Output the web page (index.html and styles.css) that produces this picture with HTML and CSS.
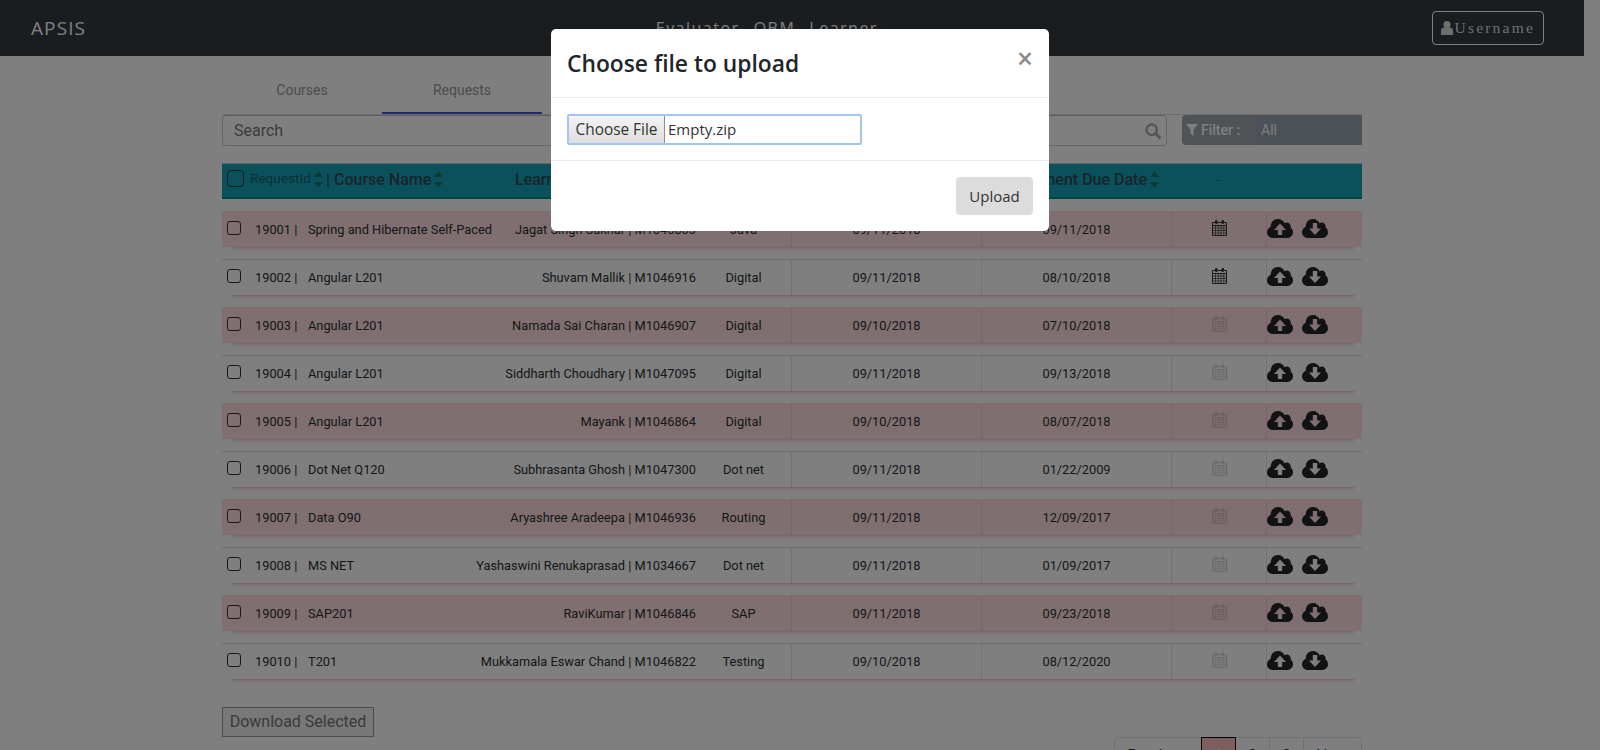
FILE: index.html
```html
<!DOCTYPE html>
<html lang="en">
<head>
  <meta charset="UTF-8">
  <title>APSIS</title>
  <link rel="stylesheet" href="styles.css">
</head>
<body>

  <!-- icons used all over the table -->
  <svg class="sprite" xmlns="http://www.w3.org/2000/svg">
    <symbol id="ic-up" viewBox="0 0 26 19">
      <path fill-rule="evenodd" d="M6 19C2.700 19 0 16.400 0 13.200 0 10.700 1.500 8.600 3.700 7.700 3.500 3.400 6.800 0 11 0c2.900 0 5.400 1.700 6.600 4.200.7-.4 1.500-.6 2.200-.6 2.300 0 3.900 1.700 3.900 4.100 0 .3 0 .6-.1.900 1.400 1 2.400 2.700 2.400 4.600 0 3.200-2.700 5.800-6 5.800zM13 4.500 7 11h3.800v5h4.400v-5H19z"/>
    </symbol>
    <symbol id="ic-down" viewBox="0 0 26 19">
      <path fill-rule="evenodd" d="M6 19C2.700 19 0 16.400 0 13.200 0 10.700 1.500 8.600 3.700 7.700 3.500 3.400 6.800 0 11 0c2.900 0 5.400 1.700 6.600 4.200.7-.4 1.500-.6 2.200-.6 2.300 0 3.900 1.700 3.900 4.100 0 .3 0 .6-.1.900 1.400 1 2.400 2.700 2.400 4.600 0 3.200-2.700 5.800-6 5.800zM10.800 4v5.500H7l6 6.500 6-6.500h-3.800V4z"/>
    </symbol>
    <symbol id="ic-cal" viewBox="0 0 15 16">
      <path fill="none" stroke="currentColor" d="M.5 2.500h14v13H.5zM.5 5.500h14"/>
      <path fill="none" stroke="currentColor" stroke-width=".7" d="M.5 8h14M.5 10.500h14M.5 13h14M3.500 5.500v10M6.300 5.500v10M9 5.500v10M11.800 5.500v10"/>
      <rect x="3" y="0" width="2.500" height="4" rx="1.200"/>
      <rect x="9.500" y="0" width="2.500" height="4" rx="1.200"/>
    </symbol>
    <symbol id="ic-sort" viewBox="0 0 9 17">
      <path d="M4.500 0l4.500 6H0zM4.500 17l4.500-6H0z"/>
    </symbol>
  </svg>

  <div class="page">
    <nav class="navbar">
      <a class="brand">APSIS</a>
      <div class="nav-links">
        <span>Evaluator</span>
        <span>QBM</span>
        <span>Learner</span>
      </div>
      <button type="button" class="user-btn">
        <svg class="user-ic" viewBox="0 0 12 14"><circle cx="6" cy="3.600" r="3.600"/><path d="M0 14V9.500C0 7.500 1.500 6.500 3 6.500h6c1.500 0 3 1 3 3V14z"/></svg>Username
      </button>
    </nav>

    <main class="container">
      <div class="tabs">
        <a class="tab">Courses</a>
        <a class="tab active">Requests</a>
      </div>

      <div class="toolbar">
        <div class="search">
          <span>Search</span>
          <svg class="search-ic" viewBox="0 0 16 16"><circle cx="6.700" cy="6.700" r="5.200" fill="none" stroke="currentColor" stroke-width="2.400"/><path d="M10.500 10.500l4 4" stroke="currentColor" stroke-width="3" stroke-linecap="round"/></svg>
        </div>
        <div class="filter">
          <div class="filter-label">
            <svg class="filter-ic" viewBox="0 0 12 12"><path d="M0 0h12L7.500 5.500V12L4.500 9.500v-4z"/></svg>Filter :
          </div>
          <div class="filter-value">All</div>
        </div>
      </div>

      <div class="head">
        <div><span class="check big"></span></div>
        <div class="head-id"><span class="id-label">RequestId</span><svg class="sort"><use href="#ic-sort"/></svg></div>
        <div class="head-name">| Course Name<svg class="sort"><use href="#ic-sort"/></svg></div>
        <div class="head-name">Learner Name</div>
        <div class="head-name">Track</div>
        <div class="head-name">Date</div>
        <div class="head-name head-due">Assignment Due Date<svg class="sort"><use href="#ic-sort"/></svg></div>
        <div class="center">-</div>
        <div></div>
      </div>

      <div class="item late">
        <div><span class="check"></span></div>
        <div>19001 |</div>
        <div class="course">Spring and Hibernate Self-Paced</div>
        <div class="learner">Jagat Singh Sakhar | M1046803</div>
        <div class="center">Java</div>
        <div class="center line">09/11/2018</div>
        <div class="center line">09/11/2018</div>
        <div class="center line"><svg class="cal"><use href="#ic-cal"/></svg></div>
        <div class="line clouds"><svg class="cloud"><use href="#ic-up"/></svg><svg class="cloud"><use href="#ic-down"/></svg></div>
      </div>

      <div class="item">
        <div><span class="check"></span></div>
        <div>19002 |</div>
        <div class="course">Angular L201</div>
        <div class="learner">Shuvam Mallik | M1046916</div>
        <div class="center">Digital</div>
        <div class="center line">09/11/2018</div>
        <div class="center line">08/10/2018</div>
        <div class="center line"><svg class="cal"><use href="#ic-cal"/></svg></div>
        <div class="line clouds"><svg class="cloud"><use href="#ic-up"/></svg><svg class="cloud"><use href="#ic-down"/></svg></div>
      </div>

      <div class="item late">
        <div><span class="check"></span></div>
        <div>19003 |</div>
        <div class="course">Angular L201</div>
        <div class="learner">Namada Sai Charan | M1046907</div>
        <div class="center">Digital</div>
        <div class="center line">09/10/2018</div>
        <div class="center line">07/10/2018</div>
        <div class="center line"><svg class="cal off"><use href="#ic-cal"/></svg></div>
        <div class="line clouds"><svg class="cloud"><use href="#ic-up"/></svg><svg class="cloud"><use href="#ic-down"/></svg></div>
      </div>

      <div class="item">
        <div><span class="check"></span></div>
        <div>19004 |</div>
        <div class="course">Angular L201</div>
        <div class="learner">Siddharth Choudhary | M1047095</div>
        <div class="center">Digital</div>
        <div class="center line">09/11/2018</div>
        <div class="center line">09/13/2018</div>
        <div class="center line"><svg class="cal off"><use href="#ic-cal"/></svg></div>
        <div class="line clouds"><svg class="cloud"><use href="#ic-up"/></svg><svg class="cloud"><use href="#ic-down"/></svg></div>
      </div>

      <div class="item late">
        <div><span class="check"></span></div>
        <div>19005 |</div>
        <div class="course">Angular L201</div>
        <div class="learner">Mayank | M1046864</div>
        <div class="center">Digital</div>
        <div class="center line">09/10/2018</div>
        <div class="center line">08/07/2018</div>
        <div class="center line"><svg class="cal off"><use href="#ic-cal"/></svg></div>
        <div class="line clouds"><svg class="cloud"><use href="#ic-up"/></svg><svg class="cloud"><use href="#ic-down"/></svg></div>
      </div>

      <div class="item">
        <div><span class="check"></span></div>
        <div>19006 |</div>
        <div class="course">Dot Net Q120</div>
        <div class="learner">Subhrasanta Ghosh | M1047300</div>
        <div class="center">Dot net</div>
        <div class="center line">09/11/2018</div>
        <div class="center line">01/22/2009</div>
        <div class="center line"><svg class="cal off"><use href="#ic-cal"/></svg></div>
        <div class="line clouds"><svg class="cloud"><use href="#ic-up"/></svg><svg class="cloud"><use href="#ic-down"/></svg></div>
      </div>

      <div class="item late">
        <div><span class="check"></span></div>
        <div>19007 |</div>
        <div class="course">Data O90</div>
        <div class="learner">Aryashree Aradeepa | M1046936</div>
        <div class="center">Routing</div>
        <div class="center line">09/11/2018</div>
        <div class="center line">12/09/2017</div>
        <div class="center line"><svg class="cal off"><use href="#ic-cal"/></svg></div>
        <div class="line clouds"><svg class="cloud"><use href="#ic-up"/></svg><svg class="cloud"><use href="#ic-down"/></svg></div>
      </div>

      <div class="item">
        <div><span class="check"></span></div>
        <div>19008 |</div>
        <div class="course">MS NET</div>
        <div class="learner">Yashaswini Renukaprasad | M1034667</div>
        <div class="center">Dot net</div>
        <div class="center line">09/11/2018</div>
        <div class="center line">01/09/2017</div>
        <div class="center line"><svg class="cal off"><use href="#ic-cal"/></svg></div>
        <div class="line clouds"><svg class="cloud"><use href="#ic-up"/></svg><svg class="cloud"><use href="#ic-down"/></svg></div>
      </div>

      <div class="item late">
        <div><span class="check"></span></div>
        <div>19009 |</div>
        <div class="course">SAP201</div>
        <div class="learner">RaviKumar | M1046846</div>
        <div class="center">SAP</div>
        <div class="center line">09/11/2018</div>
        <div class="center line">09/23/2018</div>
        <div class="center line"><svg class="cal off"><use href="#ic-cal"/></svg></div>
        <div class="line clouds"><svg class="cloud"><use href="#ic-up"/></svg><svg class="cloud"><use href="#ic-down"/></svg></div>
      </div>

      <div class="item">
        <div><span class="check"></span></div>
        <div>19010 |</div>
        <div class="course">T201</div>
        <div class="learner">Mukkamala Eswar Chand | M1046822</div>
        <div class="center">Testing</div>
        <div class="center line">09/10/2018</div>
        <div class="center line">08/12/2020</div>
        <div class="center line"><svg class="cal off"><use href="#ic-cal"/></svg></div>
        <div class="line clouds"><svg class="cloud"><use href="#ic-up"/></svg><svg class="cloud"><use href="#ic-down"/></svg></div>
      </div>

      <button type="button" class="download-btn">Download Selected</button>

      <div class="pager">
        <a class="page-link prev">Previous</a>
        <a class="page-link current">1</a>
        <a class="page-link">2</a>
        <a class="page-link">3</a>
        <a class="page-link next">Next</a>
      </div>
    </main>
  </div>

  <div class="backdrop"></div>

  <div class="modal">
    <div class="modal-box">
      <div class="modal-header">
        <h2>Choose file to upload</h2>
        <span class="close">&times;</span>
      </div>
      <div class="modal-body">
        <div class="file-input">
          <span class="file-btn">Choose File</span>
          <span class="file-name">Empty.zip</span>
        </div>
      </div>
      <div class="modal-footer">
        <button type="button" class="upload-btn">Upload</button>
      </div>
    </div>
  </div>

</body>
</html>
```
FILE: styles.css
```css
* {
  box-sizing: border-box;
}
html, body {
  height: 100%;
  overflow: hidden;
}
body {
  margin: 0;
  background: #fff;
  font-family: Roboto, sans-serif;
  font-size: 12.8px;
  color: #2b2f33;
}
.sprite {
  display: none;
}

/* Barra superior */
.page {
  width: 1584px;
}
.navbar {
  display: flex;
  align-items: center;
  justify-content: space-between;
  height: 56px;
  padding: 0 40px 0 31px;
  background: #343a40;
  color: #fff;
  font-family: "Open Sans", sans-serif;
}
.brand {
  font-size: 19px;
  letter-spacing: 1.100px;
}
.nav-links {
  display: flex;
  gap: 14px;
  margin-left: 16px;
  font-size: 16px;
  letter-spacing: 1.500px;
}
.user-btn {
  display: flex;
  align-items: center;
  height: 34px;
  padding: 0 8px;
  background: none;
  border: 1px solid #fff;
  border-radius: 4px;
  color: #ddd;
  font-family: "Liberation Serif", serif;
  font-size: 15.500px;
  letter-spacing: 2.200px;
}
.user-ic {
  width: 12px;
  height: 14px;
  margin-right: 2px;
  fill: #ddd;
}

.container {
  width: 1140px;
  margin: 0 auto;
}

/* Pestañas */
.tabs {
  display: flex;
  height: 59px;
  border-bottom: 1px solid #ddd;
}
.tab {
  width: 160px;
  padding-top: 26px;
  text-align: center;
  font-size: 14px;
  color: #999;
}
.tab.active {
  border-bottom: 2px solid #3f51d5;
}

.toolbar {
  display: flex;
  justify-content: space-between;
  height: 31px;
  margin-bottom: 17px;
}
.search {
  display: flex;
  align-items: center;
  justify-content: space-between;
  width: 945px;
  padding: 0 4px 0 11px;
  border: 1px solid #ccc;
  border-top-color: #bbb;
  border-radius: 4px;
  font-size: 16px;
  color: #777;
}
.search-ic {
  width: 16px;
  height: 16px;
  margin-right: 1px;
  color: #aaa;
}

.filter {
  display: flex;
  width: 180px;
  height: 30px;
  border-radius: 4px 0 0 4px;
  overflow: hidden;
  font-size: 14px;
  color: #fff;
}
.filter-label {
  display: flex;
  align-items: center;
  width: 74px;
  padding-left: 4px;
  background: #a0a6ac;
  font-weight: 500;
}
.filter-ic {
  width: 12px;
  height: 12px;
  margin-right: 3px;
  fill: #fff;
}
.filter-value {
  display: flex;
  align-items: center;
  flex: 1;
  padding-left: 5px;
  background: #98a1af;
}

/* Encabezado y filas de la tabla */
.head,
.item {
  display: grid;
  align-items: center;
  height: 36px;
  margin-bottom: 12px;
}
.head {
  grid-template-columns: 28px 76px 189px 230px 46px 190px 190px 95px 1fr;
  background: #17a2b8;
  border-top: 1px solid #ccc;
  border-bottom: 2px solid #008a80;
  color: #2d4a55;
}
.head > div {
  display: flex;
  align-items: center;
  margin-bottom: 2px;
  white-space: nowrap;
}
.head-id {
  font-size: 13.600px;
  color: #1d5a66;
}
.id-label {
  margin-bottom: 4px;
}
.head-name {
  font-size: 16px;
  font-weight: 500;
}
.head > .head-due {
  justify-content: flex-end;
  padding-right: 12px;
}
.head > .center {
  justify-content: center;
}
.sort {
  width: 9px;
  height: 17px;
  margin-left: 3px;
  fill: #0f7a6d;
}
.item {
  grid-template-columns: 33px 53px 160px 228px 95px 190px 190px 95px 1fr;
  border-top: 1px solid #ddd;
  box-shadow: 1px 10px 3px -9px rgba(235, 130, 130, 0.6);
}
.item > div {
  display: flex;
  align-items: center;
  height: 100%;
  white-space: nowrap;
}
.item.late {
  background: #ffdfe0;
  border-top: none;
}
.item > .learner {
  justify-content: flex-end;
}
.item > .center {
  justify-content: center;
}
.item > .line {
  border-left: 1px solid #e6e6e6;
}
.item.late > .line {
  border-left-color: #f0cfd0;
}
.check {
  display: block;
  width: 14px;
  height: 14px;
  margin: -3px 0 0 5px;
  border: 1.500px solid #333;
  border-radius: 3px;
}
.check.big {
  width: 17px;
  height: 17px;
  margin-top: -3px;
  border-radius: 4px;
  border-color: #1e3a44;
}
.cal {
  width: 15px;
  height: 16px;
  margin-top: -3px;
  color: #333;
  fill: #333;
}
.cal.off {
  opacity: 0.2;
}
.clouds {
  gap: 9px;
}
.cloud {
  width: 26px;
  height: 19px;
  margin-top: -2px;
  fill: #212529;
}

.download-btn {
  display: block;
  width: 152px;
  height: 30px;
  margin-top: 28px;
  padding: 0 0 2px;
  background: #f0f0f0;
  border: 1px solid #999;
  font-family: Roboto, sans-serif;
  font-size: 16px;
  color: #757575;
}

/* Paginación */
.pager {
  display: flex;
  justify-content: flex-end;
}
.page-link {
  height: 38px;
  padding: 8px 12px;
  border: 1px solid #dee2e6;
  margin-left: -1px;
  font-size: 16px;
  line-height: 20px;
  color: #333;
}
.prev {
  border-radius: 4px 0 0 4px;
}
.next {
  border-radius: 0 4px 4px 0;
  color: #0d5bd8;
}
.current {
  position: relative;
  background: #ffbcc0;
  border-color: #000;
  color: #fff;
}

/* Fondo oscuro y ventana modal */
.backdrop {
  position: fixed;
  inset: 0;
  z-index: 10;
  background: rgba(0, 0, 0, 0.5);
}
.modal {
  position: fixed;
  inset: 0;
  z-index: 30;
  display: flex;
  justify-content: center;
  padding-top: 29px;
  pointer-events: none;
}
.modal-box {
  width: 498px;
  height: 202px;
  background: #fff;
  border-radius: 5px;
  font-family: "Open Sans", sans-serif;
  color: #212529;
}
.modal-header {
  display: flex;
  align-items: flex-start;
  justify-content: space-between;
  height: 69px;
  padding: 18px 16px 0;
  border-bottom: 1px solid #e9ecef;
}
.modal-header h2 {
  margin: 0;
  font-size: 22.800px;
  font-weight: 600;
  line-height: 34px;
}
.close {
  margin: -2px 0 0;
  font-size: 28px;
  line-height: 26px;
  font-weight: 600;
  color: #888;
}
.modal-body {
  height: 63px;
  padding: 16px;
  border-bottom: 1px solid #e9ecef;
}
.file-input {
  display: flex;
  width: 295px;
  height: 31px;
  border: 2px solid #a3c5f5;
  border-radius: 2px;
  font-size: 15px;
}
.file-btn {
  width: 96px;
  text-align: center;
  font-size: 15.400px;
  line-height: 27px;
  background: linear-gradient(#f4f4f4, #dedede);
  border-right: 1px solid #8d8d8d;
  color: #333;
}
.file-name {
  padding-left: 3px;
  line-height: 27px;
  color: #333;
}
.modal-footer {
  display: flex;
  justify-content: flex-end;
  padding: 16px;
}
.upload-btn {
  width: 77px;
  height: 38px;
  background: #dcdcdc;
  border: none;
  border-radius: 4px;
  font-family: "Open Sans", sans-serif;
  font-size: 15px;
  color: #333;
}
```
